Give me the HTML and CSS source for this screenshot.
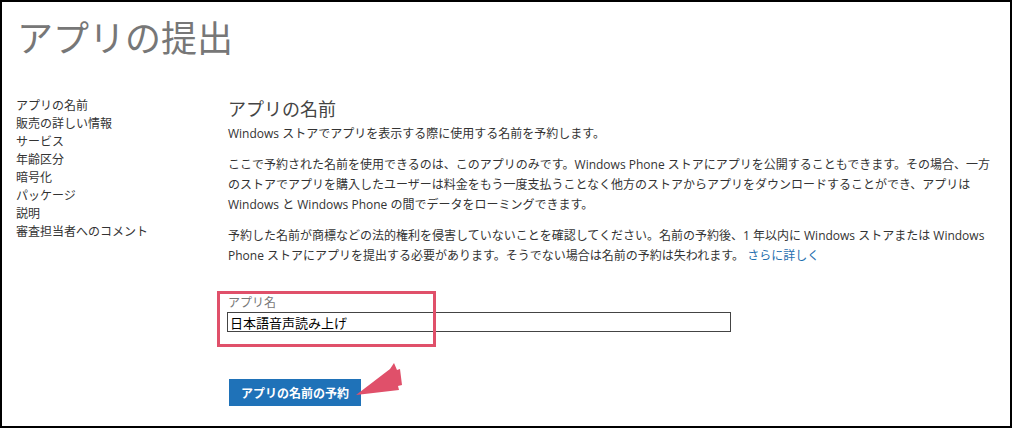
FILE: index.html
```html
<!DOCTYPE html>
<html lang="ja">
<head>
    <meta charset="UTF-8">
    <meta name="viewport" content="width=device-width, initial-scale=1.0">
    <title>アプリの提出</title>
    <link rel="stylesheet" href="styles.css">
</head>
<body>
    <div class="frame">
        <h1 class="page-title">アプリの提出</h1>
        <div class="layout">
            <ul class="side-nav">
                <li>アプリの名前</li>
                <li>販売の詳しい情報</li>
                <li>サービス</li>
                <li>年齢区分</li>
                <li>暗号化</li>
                <li>パッケージ</li>
                <li>説明</li>
                <li>審査担当者へのコメント</li>
            </ul>
            <div class="content">
                <h2 class="section-title">アプリの名前</h2>
                <p>Windows ストアでアプリを表示する際に使用する名前を予約します。</p>
                <p>ここで予約された名前を使用できるのは、このアプリのみです。Windows Phone ストアにアプリを公開することもできます。その場合、一方<br>のストアでアプリを購入したユーザーは料金をもう一度支払うことなく他方のストアからアプリをダウンロードすることができ、アプリは<br>Windows と Windows Phone の間でデータをローミングできます。</p>
                <p>予約した名前が商標などの法的権利を侵害していないことを確認してください。名前の予約後、1 年以内に Windows ストアまたは Windows<br>Phone ストアにアプリを提出する必要があります。そうでない場合は名前の予約は失われます。 <a href="#" class="more">さらに詳しく</a></p>

                <div class="field">
                    <label for="appName">アプリ名</label>
                    <input id="appName" type="text" value="日本語音声読み上げ">
                    <div class="highlight"></div>
                </div>

                <div class="actions">
                    <button class="reserve-btn">アプリの名前の予約</button>
                    <svg class="pointer" width="60" height="50" viewBox="0 0 60 50">
                        <polygon points="2,38 36,12 40,6 43,13 46,12 48,28 44,29 45,33" fill="#e0506a"/>
                    </svg>
                </div>
            </div>
        </div>
    </div>
</body>
</html>
```

FILE: styles.css
```css
* {
    box-sizing: border-box;
}

body {
    margin: 0;
    font-family: "Open Sans", "Noto Sans CJK JP", sans-serif;
    font-size: 12px;
    color: #333;
    background: #fff;
}

.frame {
    width: 1012px;
    height: 428px;
    border: 2px solid #000;
    overflow: hidden;
}

.page-title {
    margin: 0;
    padding: 10px 0 0 15px;
    height: 93px;
    font-family: "Noto Sans CJK JP", sans-serif;
    font-size: 36px;
    font-weight: 400;
    line-height: 48px;
    color: #777;
}

.layout {
    display: flex;
}

.side-nav {
    list-style: none;
    margin: 0;
    padding: 2px 0 0 14px;
    width: 226px;
    line-height: 18px;
    color: #333;
}

.content {
    flex: 1;
    padding-right: 12px;
}

.section-title {
    margin: 0 0 3px;
    font-family: "Noto Sans CJK JP", sans-serif;
    font-size: 18px;
    font-weight: 400;
    line-height: 26px;
    color: #444;
}

.content p {
    margin: 0 0 11px;
    line-height: 20px;
    white-space: nowrap;
    color: #333;
}

.more {
    color: #1f6fae;
    text-decoration: none;
}

.field {
    position: relative;
    margin-top: 29px;
    width: 504px;
}

.field label {
    display: block;
    color: #777;
    line-height: 16px;
}

.field input {
    display: block;
    width: 504px;
    height: 20px;
    margin: 1px 0 0 -1px;
    padding: 0 2px;
    border: 1px solid #444;
    font-family: "Noto Sans CJK JP", sans-serif;
    font-size: 13px;
    color: #000;
}

.highlight {
    position: absolute;
    left: -11px;
    top: -4px;
    width: 219px;
    height: 56px;
    border: 3px solid #e0506a;
}

.actions {
    position: relative;
    margin-top: 47px;
}

.reserve-btn {
    display: block;
    height: 27px;
    padding: 0 12px;
    margin-left: 1px;
    border: none;
    background: #1f72b8;
    color: #fff;
    font-family: "Noto Sans CJK JP", sans-serif;
    font-size: 12px;
    font-weight: 700;
}

.pointer {
    position: absolute;
    left: 126px;
    top: -22px;
}
```
